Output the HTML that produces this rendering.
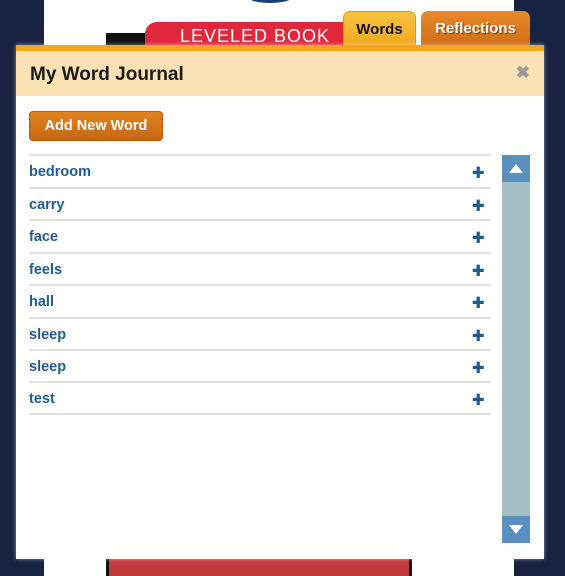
<!DOCTYPE html>
<html><head><style>
*{margin:0;padding:0;box-sizing:border-box}
body{width:565px;height:576px;background:#172341;position:relative;overflow:hidden;font-family:"Liberation Sans",sans-serif}
.abs{position:absolute}
.row{position:absolute;left:29px;width:462px;height:33px;border-top:2px solid #e2e2dc;color:#1f5a96;font-weight:bold;font-size:14.5px;padding-top:8px}
.row span{position:absolute;right:7px;top:6px;font-size:20px;font-weight:900;color:#1f5a96;-webkit-text-stroke:1px #1f5a96}
</style></head><body>
<div class="abs" style="left:44px;top:0;width:470px;height:576px;background:#fff"></div>
<div class="abs" style="left:250px;top:-6px;width:40px;height:9px;background:#1d3f7a;border-radius:50%"></div>
<div class="abs" style="left:106px;top:33px;width:40px;height:14px;background:#111"></div>
<div class="abs" style="left:145px;top:22px;width:210px;height:26px;background:#e0283a;border-radius:12px 0 0 0;color:#fff;font-size:18px;letter-spacing:1px;padding:4px 0 0 35px;white-space:nowrap;overflow:hidden">LEVELED BOOK</div>
<div class="abs" style="left:343px;top:11px;width:73px;height:36px;background:linear-gradient(#f7c440,#f3a81e);border:1px solid #d99a20;border-radius:7px 7px 0 0;text-align:center;font-weight:bold;font-size:15px;padding-top:9px;color:#111">Words</div>
<div class="abs" style="left:421px;top:11px;width:109px;height:36px;background:linear-gradient(#e8892a,#cf6d14);border-radius:7px 7px 0 0;text-align:center;font-weight:bold;font-size:15px;padding-top:9px;color:#fff;text-shadow:1px 1px 1px #7a3a00">Reflections</div>
<div class="abs" style="left:106px;top:556px;width:306px;height:20px;background:#c4393c;border-left:3px solid #111;border-right:3px solid #111"></div>
<div class="abs" style="left:16px;top:45px;width:528px;height:514px;background:#fff;border-top:6px solid #f2a51f;box-shadow:0 0 4px rgba(255,255,255,.5)">
<div style="height:45px;background:#fae2b4;font-weight:bold;font-size:19px;padding:13px 0 0 14px;color:#1a1a1a">My Word Journal<span style="position:absolute;right:14px;top:12px;color:#999;font-size:17px">✖</span></div>
</div>
<div class="abs" style="left:29px;top:111px;width:134px;height:30px;background:linear-gradient(#e0821f,#c86712);border:1px solid #b55a10;border-radius:4px;color:#fff;font-weight:bold;font-size:14.5px;text-align:center;padding-top:6px">Add New Word</div>
<div class="row" style="top:154px">bedroom<span>+</span></div>
<div class="row" style="top:187px">carry<span>+</span></div>
<div class="row" style="top:219px">face<span>+</span></div>
<div class="row" style="top:252px">feels<span>+</span></div>
<div class="row" style="top:284px">hall<span>+</span></div>
<div class="row" style="top:317px">sleep<span>+</span></div>
<div class="row" style="top:349px">sleep<span>+</span></div>
<div class="row" style="top:381px">test<span>+</span></div>
<div class="abs" style="left:29px;top:413px;width:462px;height:2px;background:#e2e2dc"></div>
<div class="abs" style="left:502px;top:155px;width:28px;height:388px;background:#a5bfc6"></div>
<div class="abs" style="left:502px;top:155px;width:28px;height:27px;background:#5b8fbf"><div style="margin:9px auto 0;width:0;height:0;border-left:7px solid transparent;border-right:7px solid transparent;border-bottom:9px solid #fff"></div></div>
<div class="abs" style="left:502px;top:516px;width:28px;height:27px;background:#5b8fbf"><div style="margin:9px auto 0;width:0;height:0;border-left:7px solid transparent;border-right:7px solid transparent;border-top:9px solid #fff"></div></div>
</body></html>
